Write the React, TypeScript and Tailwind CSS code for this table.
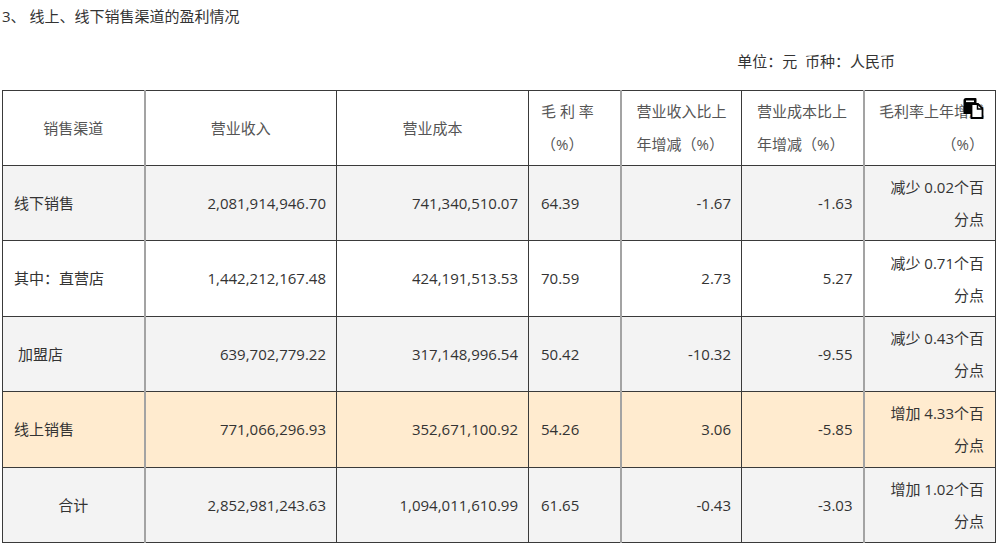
import React from "react";

const rows = [
  {
    name: "线下销售",
    nameAlign: "text-left pl-[11px]",
    revenue: "2,081,914,946.70",
    cost: "741,340,510.07",
    margin: "64.39",
    revChange: "-1.67",
    costChange: "-1.63",
    marginChange: "减少 0.02个百",
    bg: "bg-[#f3f3f3]",
  },
  {
    name: "其中：直营店",
    nameAlign: "text-left pl-[11px]",
    revenue: "1,442,212,167.48",
    cost: "424,191,513.53",
    margin: "70.59",
    revChange: "2.73",
    costChange: "5.27",
    marginChange: "减少 0.71个百",
    bg: "bg-white",
  },
  {
    name: "加盟店",
    nameAlign: "text-left pl-[15px]",
    revenue: "639,702,779.22",
    cost: "317,148,996.54",
    margin: "50.42",
    revChange: "-10.32",
    costChange: "-9.55",
    marginChange: "减少 0.43个百",
    bg: "bg-[#f3f3f3]",
  },
  {
    name: "线上销售",
    nameAlign: "text-left pl-[11px]",
    revenue: "771,066,296.93",
    cost: "352,671,100.92",
    margin: "54.26",
    revChange: "3.06",
    costChange: "-5.85",
    marginChange: "增加 4.33个百",
    bg: "bg-[#ffebcf]",
  },
  {
    name: "合计",
    nameAlign: "text-center",
    revenue: "2,852,981,243.63",
    cost: "1,094,011,610.99",
    margin: "61.65",
    revChange: "-0.43",
    costChange: "-3.03",
    marginChange: "增加 1.02个百",
    bg: "bg-[#f3f3f3]",
  },
];

function CopyIcon() {
  return (
    <svg width="21" height="22" viewBox="0 0 21 22" className="absolute left-[98px] top-[6px]">
      {/* back sheet */}
      <path d="M3 1h9.5a1 1 0 0 1 1 1v15H0.5V3.5A2.5 2.5 0 0 1 3 1z" fill="#000" />
      <rect x="3" y="3.5" width="8" height="1.6" fill="#fff" />
      {/* front page with folded corner */}
      <path d="M8.5 7h6.5l4.5 4.5v9.5h-11z" fill="#fff" stroke="#000" strokeWidth="1.8" />
      <path d="M14.5 7v5h5" fill="none" stroke="#000" strokeWidth="1.5" />
    </svg>
  );
}

export default function App() {
  const cell = "border border-[#3a3a3a] align-middle";
  const gray = "border-l-2 border-l-[#a3a3a3]";

  return (
    <div className="w-[1000px] h-[547px] bg-white px-[2px] pt-[6px] text-[15px] text-[#333] font-['Open_Sans','Noto_Sans_CJK_SC',sans-serif] overflow-hidden">
      <div className="leading-[20px]">3、 线上、线下销售渠道的盈利情况</div>
      <div className="mt-[25px] leading-[20px] text-right pr-[103px]">单位：元&nbsp; 币种：人民币</div>

      <table className="mt-[19px] w-[993px] table-fixed border-collapse">
        <colgroup>
          <col className="w-[142px]" />
          <col className="w-[192px]" />
          <col className="w-[192px]" />
          <col className="w-[92px]" />
          <col className="w-[121px]" />
          <col className="w-[122px]" />
          <col className="w-[132px]" />
        </colgroup>
        <thead>
          <tr className="h-[75px] bg-white text-[#555] leading-[33px]">
            <th className={`${cell} font-normal text-center`}>销售渠道</th>
            <th className={`${cell} ${gray} font-normal text-center`}>营业收入</th>
            <th className={`${cell} font-normal text-center`}>营业成本</th>
            <th className={`${cell} font-normal text-left pl-[12px]`}>
              毛 利 率
              <br />
              （%）
            </th>
            <th className={`${cell} ${gray} font-normal text-left pl-[15px]`}>
              营业收入比上
              <br />
              年增减（%）
            </th>
            <th className={`${cell} font-normal text-left pl-[15px]`}>
              营业成本比上
              <br />
              年增减（%）
            </th>
            <th className={`${cell} ${gray} relative font-normal text-right pr-[11px]`}>
              毛利率上年增减
              <br />
              （%）
              <CopyIcon />
            </th>
          </tr>
        </thead>
        <tbody>
          {rows.map((r) => (
            <tr key={r.name} className={`h-[75.4px] ${r.bg}`}>
              <td className={`${cell} ${r.nameAlign}`}>{r.name}</td>
              <td className={`${cell} ${gray} text-right pr-[10px]`}>{r.revenue}</td>
              <td className={`${cell} text-right pr-[10px]`}>{r.cost}</td>
              <td className={`${cell} text-left pl-[12px]`}>{r.margin}</td>
              <td className={`${cell} ${gray} text-right pr-[10px]`}>{r.revChange}</td>
              <td className={`${cell} text-right pr-[10px]`}>{r.costChange}</td>
              <td className={`${cell} ${gray} text-right pr-[11px] leading-[32px]`}>
                {r.marginChange}
                <br />
                分点
              </td>
            </tr>
          ))}
        </tbody>
      </table>
    </div>
  );
}
